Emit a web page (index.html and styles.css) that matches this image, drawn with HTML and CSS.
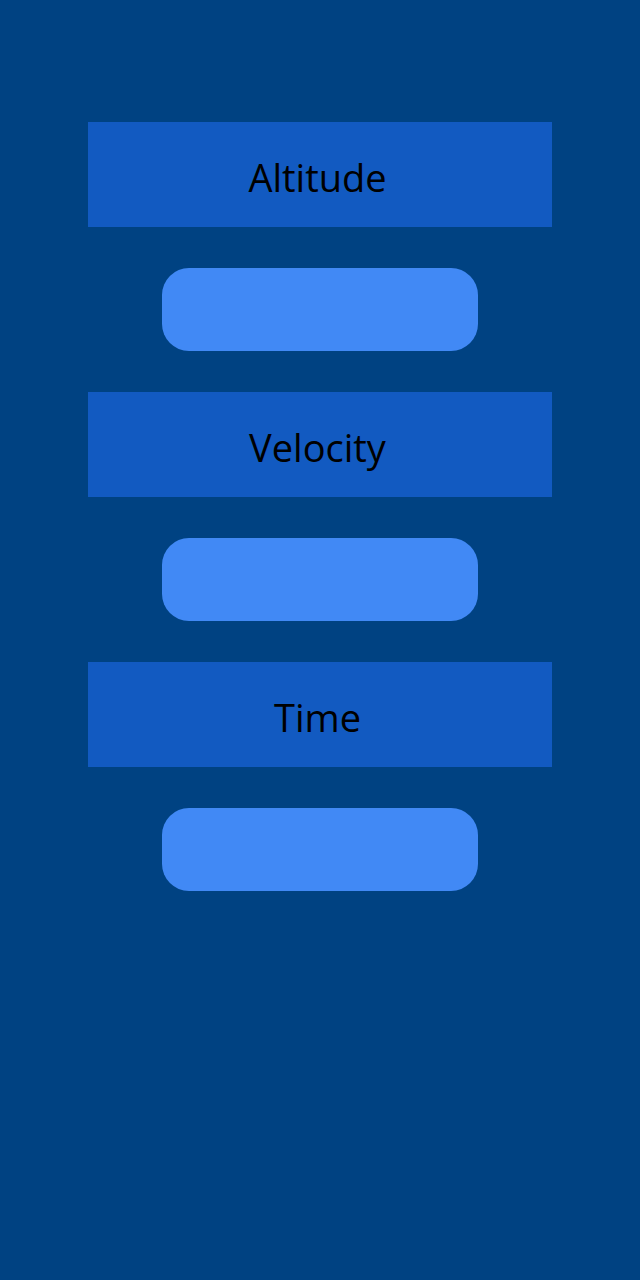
FILE: index.html
```html
<!DOCTYPE html>
<html>
<head>
<meta charset="utf-8">
<link rel="stylesheet" href="styles.css">
</head>
<body>
<main class="panel">
  <div class="label">Altitude</div>
  <div class="pill"></div>
  <div class="label">Velocity</div>
  <div class="pill"></div>
  <div class="label">Time</div>
  <div class="pill"></div>
</main>
</body>
</html>
```
FILE: styles.css
```css
html, body {
  margin: 0;
  padding: 0;
  background: #004282;
  height: 100%;
}
.panel {
  display: flex;
  flex-direction: column;
  align-items: center;
  gap: 41px;
  padding-top: 122px;
}
.label {
  box-sizing: border-box;
  width: 464px;
  height: 105px;
  padding: 4px 5px 0 0;
  background: #125AC1;
  display: flex;
  align-items: center;
  justify-content: center;
  font-family: "Open Sans", sans-serif;
  font-size: 38px;
  color: #000;
}
.pill {
  width: 316px;
  height: 83px;
  border-radius: 27px;
  background: #4189F5;
}
```
